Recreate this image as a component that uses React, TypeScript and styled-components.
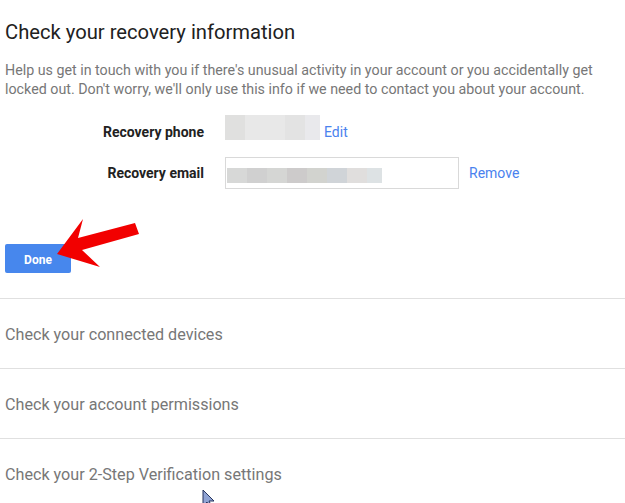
import React from "react";
import styled, { createGlobalStyle } from "styled-components";

const Global = createGlobalStyle`
  html, body { margin: 0; padding: 0; background: #fff; }
  body { font-family: Roboto, "Noto Sans", Arial, sans-serif; overflow: hidden; }
`;

const Page = styled.div`
  position: relative;
  width: 625px;
  height: 503px;
  overflow: hidden;
`;

const Top = styled.div`
  padding: 20px 0 0 5px;
`;

const Heading = styled.h1`
  margin: 0;
  font-size: 20.2px;
  line-height: 24px;
  font-weight: 400;
  color: #212121;
`;

const Intro = styled.p`
  margin: 17px 0 0;
  font-size: 14.25px;
  line-height: 19px;
  color: #777;
  width: 615px;
`;

const Form = styled.div`
  display: grid;
  grid-template-columns: 199px auto;
  column-gap: 21px;
  row-gap: 17px;
  margin-top: 16px;
  padding-left: 5px;
  justify-content: start;
`;

const Label = styled.div<{ $align: "end" | "center" }>`
  justify-self: end;
  align-self: ${(p) => (p.$align === "end" ? "end" : "center")};
  font-size: 14px;
  line-height: 16px;
  font-weight: 700;
  color: #222;
`;

const Value = styled.div<{ $align: "end" | "center" }>`
  display: flex;
  align-items: ${(p) => (p.$align === "end" ? "flex-end" : "center")};
`;

const Blur = styled.div<{ $h: number; $cols: string }>`
  display: grid;
  grid-template-columns: ${(p) => p.$cols};
  height: ${(p) => p.$h}px;
`;

const Cell = styled.div<{ $c: string }>`
  background: ${(p) => p.$c};
`;

const Link = styled.a<{ $ml: number; $mb?: number }>`
  font-size: 14px;
  line-height: 16px;
  color: #4a82ee;
  text-decoration: none;
  cursor: pointer;
  margin-left: ${(p) => p.$ml}px;
  margin-bottom: ${(p) => p.$mb ?? 0}px;
`;

const EmailBox = styled.div`
  box-sizing: border-box;
  width: 234px;
  height: 32px;
  border: 1px solid #d9d9d9;
  padding: 10px 0 0 1px;
`;

const ButtonRow = styled.div`
  padding-left: 5px;
`;

const Done = styled.button`
  margin-top: 55px;
  width: 66px;
  height: 29px;
  border: none;
  border-radius: 2px;
  background: #4787ed;
  color: #fff;
  font-family: Roboto, Arial, sans-serif;
  font-weight: 700;
  font-size: 12px;
  padding: 2px 0 0;
  display: block;
`;

const Sections = styled.div`
  margin-top: 25px;
`;

const Section = styled.div`
  box-sizing: border-box;
  height: 70px;
  border-top: 1px solid #e0e0e0;
  display: flex;
  align-items: center;
  padding: 2px 0 0 5px;
  font-size: 16.15px;
  line-height: 20px;
  color: #777;
`;

const Overlay = styled.svg`
  position: absolute;
  left: 0;
  top: 0;
  pointer-events: none;
`;

const phoneCells = ["#e0e0df", "#e8e8e8", "#e8e8e8", "#e3e3e3", "#e9e9ec"];
const emailCells = ["#d7d8d7", "#d0d0d0", "#d5d6d4", "#cdcbcb", "#d2d3cf", "#d0d4d8", "#e0dedd", "#dde2e4"];

export default function App() {
  return (
    <Page>
      <Global />
      <Top>
        <Heading>Check your recovery information</Heading>
        <Intro>
          Help us get in touch with you if there's unusual activity in your account or you accidentally get
          locked out. Don't worry, we'll only use this info if we need to contact you about your account.
        </Intro>
      </Top>
      <Form>
        <Label $align="end">Recovery phone</Label>
        <Value $align="end">
          <Blur $h={25} $cols="20px 20px 20px 20px 15px">
            {phoneCells.map((c, i) => (
              <Cell key={i} $c={c} />
            ))}
          </Blur>
          <Link $ml={4} $mb={0}>Edit</Link>
        </Value>
        <Label $align="center">Recovery email</Label>
        <Value $align="center">
          <EmailBox>
            <Blur $h={15} $cols="20px 20px 20px 20px 20px 20px 20px 15px">
              {emailCells.map((c, i) => (
                <Cell key={i} $c={c} />
              ))}
            </Blur>
          </EmailBox>
          <Link $ml={10}>Remove</Link>
        </Value>
      </Form>
      <ButtonRow>
        <Done>Done</Done>
      </ButtonRow>
      <Sections>
        <Section>Check your connected devices</Section>
        <Section>Check your account permissions</Section>
        <Section>Check your 2-Step Verification settings</Section>
      </Sections>
      <Overlay width="625" height="503" viewBox="0 0 625 503">
        <polygon
          points="57,254 83,219 78,238 135,223 139,234 82,250 100,267"
          fill="#f20000"
        />
        <polygon
          points="203,490 203,506 207,502 210,508 212,507 209,501 214,501"
          fill="#8fa3d4"
          stroke="#26335c"
          strokeWidth="1"
        />
      </Overlay>
    </Page>
  );
}
